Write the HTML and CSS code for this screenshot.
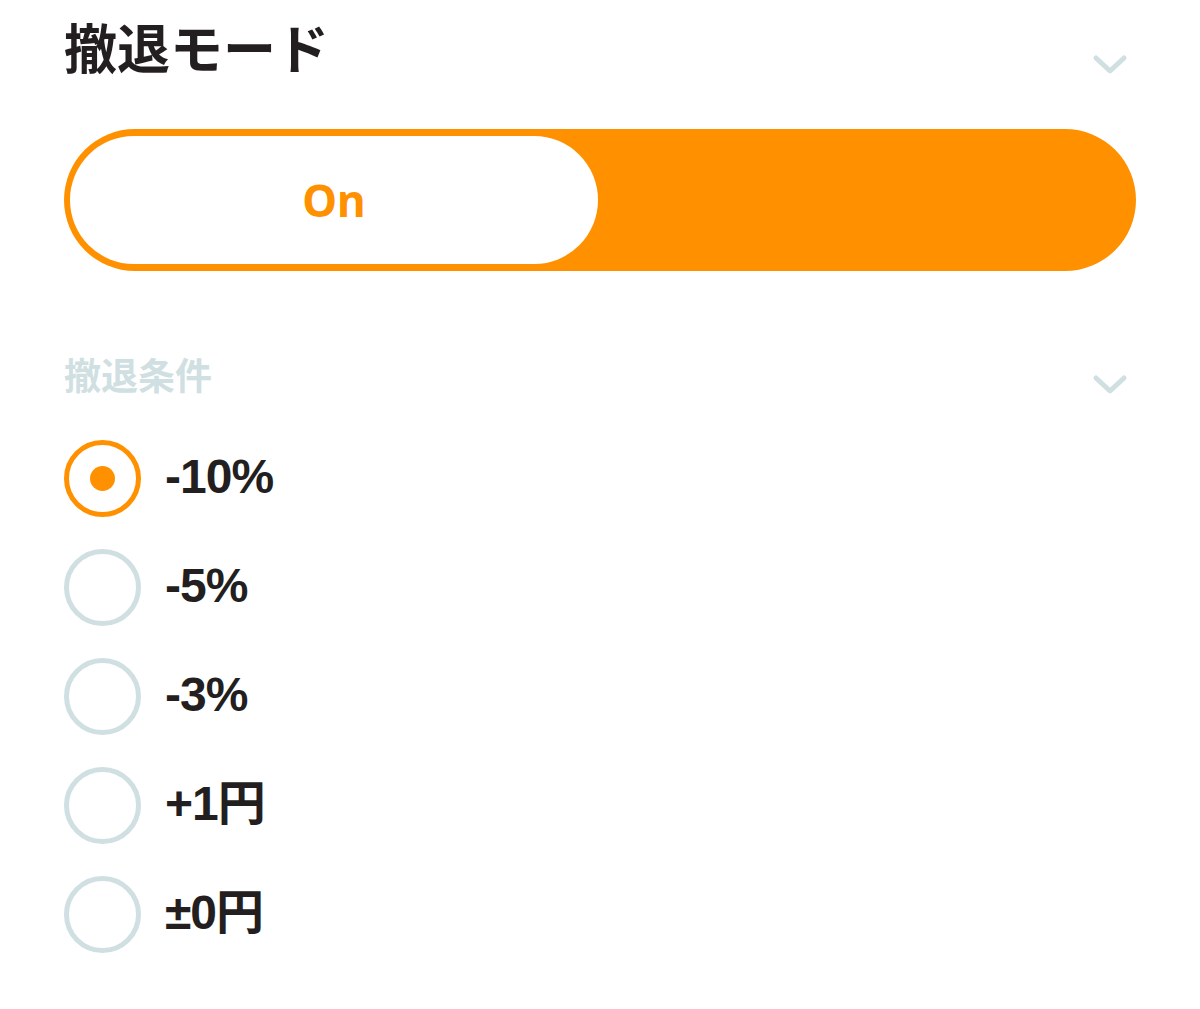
FILE: index.html
```html
<!DOCTYPE html>
<html lang="ja">
<head>
<meta charset="utf-8">
<link rel="stylesheet" href="styles.css">
</head>
<body>
<div class="page">
  <div class="head">
    <h1 class="title">撤退モード</h1>
    <svg class="chev chev-top" width="36" height="24" viewBox="0 0 36 24"><path d="M4 5 L18 18 L32 5" fill="none" stroke="#cfdfe2" stroke-width="5" stroke-linecap="round" stroke-linejoin="round"/></svg>
  </div>
  <div class="toggle">
    <div class="knob">On</div>
  </div>
  <div class="sub-head">
    <h2 class="subtitle">撤退条件</h2>
    <svg class="chev chev-sub" width="36" height="24" viewBox="0 0 36 24"><path d="M4 5 L18 18 L32 5" fill="none" stroke="#cfdfe2" stroke-width="5" stroke-linecap="round" stroke-linejoin="round"/></svg>
  </div>
  <ul class="options">
    <li class="opt"><span class="radio on"></span><span class="label">-10%</span></li>
    <li class="opt"><span class="radio"></span><span class="label">-5%</span></li>
    <li class="opt"><span class="radio"></span><span class="label">-3%</span></li>
    <li class="opt"><span class="radio"></span><span class="label">+1円</span></li>
    <li class="opt"><span class="radio"></span><span class="label">±0円</span></li>
  </ul>
</div>
</body>
</html>
```
FILE: styles.css
```css
html, body {
  margin: 0;
  padding: 0;
  background: #ffffff;
}
.page {
  width: 1200px;
  box-sizing: border-box;
  padding: 0 64px 0 64px;
  font-family: "Liberation Sans", "Noto Sans CJK JP", sans-serif;
  color: #231f20;
}
.head {
  display: flex;
  justify-content: space-between;
  align-items: flex-start;
  padding-top: 15px;
  height: 129px;
  box-sizing: border-box;
}
.title {
  margin: 0;
  font-family: "Noto Sans CJK JP", sans-serif;
  font-weight: 700;
  font-size: 53px;
  line-height: 62px;
  letter-spacing: 0;
  color: #231f20;
}
.chev {
  display: block;
  margin-right: 8px;
}
.chev-top {
  margin-top: 38px;
}
.toggle {
  height: 142px;
  border-radius: 71px;
  background: #ff9100;
  box-sizing: border-box;
  padding: 7px 6px;
}
.knob {
  width: 528px;
  height: 128px;
  border-radius: 64px;
  background: #ffffff;
  display: flex;
  align-items: center;
  justify-content: center;
  color: #ff9100;
  font-family: "Noto Sans", sans-serif;
  font-weight: 700;
  font-size: 44px;
  box-sizing: border-box;
}
.sub-head {
  display: flex;
  justify-content: space-between;
  align-items: flex-start;
  margin-top: 81px;
  height: 88px;
}
.subtitle {
  margin: 0;
  font-family: "Noto Sans CJK JP", sans-serif;
  font-weight: 700;
  font-size: 37px;
  line-height: 44px;
  color: #d0dfe1;
}
.chev-sub {
  margin-top: 21px;
}
.options {
  list-style: none;
  margin: 0;
  padding: 0;
  display: flex;
  flex-direction: column;
  gap: 32px;
}
.opt {
  display: flex;
  align-items: center;
  height: 77px;
  gap: 24px;
}
.radio {
  width: 77px;
  height: 77px;
  border-radius: 50%;
  border: 5px solid #cfdfe2;
  box-sizing: border-box;
  flex: none;
  display: flex;
  align-items: center;
  justify-content: center;
}
.radio.on {
  border-color: #ff9100;
}
.radio.on::after {
  content: "";
  width: 25px;
  height: 25px;
  border-radius: 50%;
  background: #ff9100;
}
.label {
  font-family: "Liberation Sans", "Noto Sans CJK JP", sans-serif;
  font-weight: 700;
  font-size: 48px;
  line-height: 56px;
  letter-spacing: -1px;
  color: #231f20;
  margin-top: -4px;
}
```
